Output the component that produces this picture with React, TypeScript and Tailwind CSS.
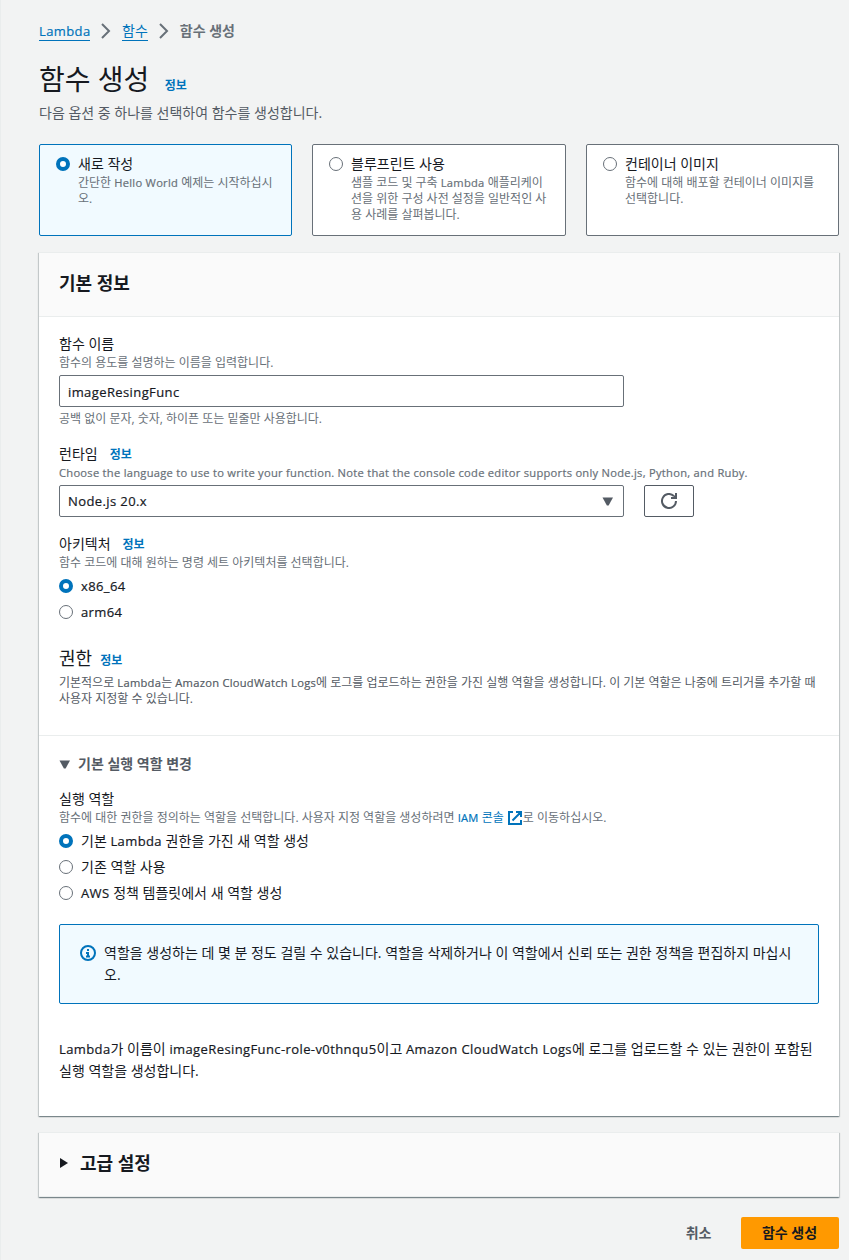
import React from "react";

function T({ children, small = false }: { children: string; small?: boolean }) {
  return (
    <>
      {children.split(/([A-Za-z][\x20-\x7e]*[A-Za-z0-9.])/).map((part, i) =>
        i % 2 === 1 ? (
          <span
            key={i}
            className={
              "text-[0.93em] font-medium [-webkit-text-stroke:0.2px_currentColor] " +
              (small ? "tracking-[0.0237em]" : "tracking-[0.03em]")
            }
          >
            {part}
          </span>
        ) : (
          part
        ),
      )}
    </>
  );
}

function Radio({ checked = false }: { checked?: boolean }) {
  return (
    <svg width="14" height="14" viewBox="0 0 14 14" className="block shrink-0">
      {checked ? (
        <circle cx="7" cy="7" r="5" fill="#fff" stroke="#0073bb" strokeWidth="4" />
      ) : (
        <circle cx="7" cy="7" r="6.5" fill="#fff" stroke="#687078" />
      )}
    </svg>
  );
}

function Chevron() {
  return (
    <svg width="10" height="16" viewBox="0 0 10 16" className="block shrink-0" fill="none">
      <path d="M1 1l7 7-7 7" stroke="#687078" strokeWidth="2" />
    </svg>
  );
}

function CaretDown() {
  return (
    <svg width="11" height="9" viewBox="0 0 11 9" className="block shrink-0">
      <path d="M.5.5h10.5l-4.4 8h-1.7z" fill="#545b64" />
    </svg>
  );
}

function Info({ className = "" }: { className?: string }) {
  return <a className={"text-xs leading-4 font-bold text-[#0073bb] " + className}>정보</a>;
}

function Tile({ title, lines, checked = false }: { title: string; lines: string[]; checked?: boolean }) {
  return (
    <div
      className={
        "flex h-[92px] rounded-[2px] border pl-4 pt-2 " +
        (checked ? "border-[#0073bb] bg-[#f1faff]" : "border-[#687078] bg-white")
      }
    >
      <div className="pt-1">
        <Radio checked={checked} />
      </div>
      <div className="ml-2">
        <div className="h-[22px] text-sm leading-[22px] text-[#16191f]">{title}</div>
        {lines.map((line) => (
          <div key={line} className="h-4 text-xs leading-4 text-[#687078]"><T small>{line}</T></div>
        ))}
      </div>
    </div>
  );
}

function Option({ label, checked = false }: { label: string; checked?: boolean }) {
  return (
    <div className="flex h-[22px] items-center gap-2">
      <Radio checked={checked} />
      <span className="text-sm leading-[22px]"><T>{label}</T></span>
    </div>
  );
}

function Label({ text, info = false }: { text: string; info?: boolean }) {
  return (
    <div className="flex h-[22px] items-baseline text-sm leading-[22px]">
      <span>{text}</span>
      {info && <Info className="ml-3" />}
    </div>
  );
}

function Hint({ children }: { children: React.ReactNode }) {
  return <div className="h-4 text-xs leading-4 text-[#687078]">{children}</div>;
}

const panel =
  "border-t border-[#eaeded] shadow-[0_1px_1px_0_rgba(0,28,36,0.3),1px_1px_1px_0_rgba(0,28,36,0.15),-1px_1px_1px_0_rgba(0,28,36,0.15)]";

export default function App() {
  return (
    <div className="h-[1260px] w-[849px] overflow-hidden whitespace-nowrap border-l border-[#eaeded] bg-[#f2f3f3] pl-[38px] pr-[10px] font-['Open_Sans','Noto_Sans_CJK_KR',sans-serif] text-[#16191f]">
      <nav className="flex h-[62px] items-center text-sm leading-[18px] text-[#0073bb]">
        <a className="w-[51px] border-b border-[#0073bb]"><T>Lambda</T></a>
        <span className="ml-[11px]"><Chevron /></span>
        <a className="ml-[11px] border-b border-[#0073bb]">함수</a>
        <span className="ml-[11px]"><Chevron /></span>
        <span className="ml-[11px] font-bold text-[#687078]">함수 생성</span>
      </nav>

      <div className="-mt-px flex h-[41px] items-baseline leading-9">
        <h1 className="text-[28px] leading-9">함수 생성</h1>
        <Info className="ml-[15.5px]" />
      </div>
      <p className="h-[42px] text-sm leading-[22px] text-[#545b64]">다음 옵션 중 하나를 선택하여 함수를 생성합니다.</p>

      <div className="grid grid-cols-[253px_254px_253px] gap-5">
        <Tile checked title="새로 작성" lines={["간단한 Hello World 예제는 시작하십시", "오."]} />
        <Tile
          title="블루프린트 사용"
          lines={["샘플 코드 및 구축 Lambda 애플리케이", "션을 위한 구성 사전 설정을 일반적인 사", "용 사례를 살펴봅니다."]}
        />
        <Tile title="컨테이너 이미지" lines={["함수에 대해 배포할 컨테이너 이미지를", "선택합니다."]} />
      </div>

      <section className={"mt-4 h-[864px] bg-white " + panel}>
        <header className="flex h-16 items-center border-b border-[#eaeded] bg-[#fafafa] px-5 pb-1">
          <h2 className="text-lg leading-[22px] font-bold">기본 정보</h2>
        </header>

        <div className="h-[418px] px-5 pt-4">
          <Label text="함수 이름" />
          <Hint>함수의 용도를 설명하는 이름을 입력합니다.</Hint>
          <div className="mt-1 flex h-8 w-[565px] items-center rounded-[2px] border border-[#687078] px-2 pt-0.5 text-sm">
            <span><T>imageResingFunc</T></span>
          </div>
          <div className="mt-1"><Hint>공백 없이 문자, 숫자, 하이픈 또는 밑줄만 사용합니다.</Hint></div>

          <div className="mt-4">
            <Label text="런타임" info />
            <Hint><T small>Choose the language to use to write your function. Note that the console code editor supports only Node.js, Python, and Ruby.</T></Hint>
          </div>
          <div className="mt-1 flex gap-5">
            <div className="flex h-8 w-[565px] items-center justify-between rounded-[2px] border border-[#687078] pl-2 pr-[10px] text-sm">
              <span><T>Node.js 20.x</T></span>
              <CaretDown />
            </div>
            <button className="flex h-8 w-[50px] items-center justify-center rounded-[2px] border border-[#545b64] bg-white">
              <svg width="16" height="16" viewBox="0 0 16 16" fill="none" stroke="#545b64" strokeWidth="2">
                <path d="M15 8a7 7 0 1 1-2.2-5.1" />
                <path d="M10 5h5V0" />
                <path d="M11 5l4-4v4z" fill="#545b64" stroke="none" />
              </svg>
            </button>
          </div>

          <div className="mt-4">
            <Label text="아키텍처" info />
            <Hint>함수 코드에 대해 원하는 명령 세트 아키텍처를 선택합니다.</Hint>
          </div>
          <div className="mt-1 flex flex-col gap-1">
            <Option checked label="x86_64" />
            <Option label="arm64" />
          </div>

          <div className="mt-6 flex h-7 items-baseline">
            <h3 className="text-lg leading-[22px]">권한</h3>
            <Info className="ml-2" />
          </div>
          <div className="text-xs leading-4 text-[#545b64]">
            <div className="h-4"><T small>기본적으로 Lambda는 Amazon CloudWatch Logs에 로그를 업로드하는 권한을 가진 실행 역할을 생성합니다. 이 기본 역할은 나중에 트리거를 추가할 때</T></div>
            <div className="h-4">사용자 지정할 수 있습니다.</div>
          </div>
        </div>

        <div className="border-t border-[#eaeded] px-5 pt-[17px]">
          <div className="flex h-[22px] items-center text-sm font-bold text-[#545b64]">
            <CaretDown />
            <span className="ml-2">기본 실행 역할 변경</span>
          </div>
          <div className="mt-[13px]">
            <Label text="실행 역할" />
            <Hint>
              <span className="flex">
                <span>함수에 대한 권한을 정의하는 역할을 선택합니다. 사용자 지정 역할을 생성하려면&nbsp;</span>
                <a className="text-[#0073bb]"><T small>IAM 콘솔</T></a>
                <svg width="16" height="16" viewBox="0 0 16 16" fill="none" stroke="#0073bb" strokeWidth="2" className="ml-[3px] block">
                  <path d="M6 2H2v12h12v-4M9 2h5v5M14 2L5.5 10.5" />
                  <path d="M10 2h4v4z" fill="#0073bb" stroke="none" />
                </svg>
                <span>로 이동하십시오.</span>
              </span>
            </Hint>
          </div>
          <div className="mt-1 flex flex-col gap-1">
            <Option checked label="기본 Lambda 권한을 가진 새 역할 생성" />
            <Option label="기존 역할 사용" />
            <Option label="AWS 정책 템플릿에서 새 역할 생성" />
          </div>

          <div className="mt-5 flex h-20 rounded-[2px] border border-[#0073bb] bg-[#f1faff] pl-5 pt-[17px]">
            <svg width="16" height="16" viewBox="0 0 16 16" fill="none" stroke="#0073bb" strokeWidth="2" className="mt-[3px] shrink-0">
              <circle cx="8" cy="8" r="7" />
              <path d="M8 11V8H6M6 11.5h4M7 5h2" />
            </svg>
            <p className="ml-2 text-sm leading-[22px]">
              역할을 생성하는 데 몇 분 정도 걸릴 수 있습니다. 역할을 삭제하거나 이 역할에서 신뢰 또는 권한 정책을 편집하지 마십시
              <br />
              오.
            </p>
          </div>

          <p className="mt-[34px] text-sm leading-[22px]">
            <T>Lambda가 이름이 imageResingFunc-role-v0thnqu5이고 Amazon CloudWatch Logs에 로그를 업로드할 수 있는 권한이 포함된</T>
            <br />
            실행 역할을 생성합니다.
          </p>
        </div>
      </section>

      <section className={"mt-4 flex h-[65px] items-center border-b bg-[#fafafa] px-5 pb-[3px] " + panel}>
        <svg width="9" height="10" viewBox="0 0 9 10"><path d="M1 0l8 5-8 5z" fill="#16191f" /></svg>
        <h2 className="ml-3 text-lg leading-[22px] font-bold">고급 설정</h2>
      </section>

      <div className="mt-5 flex items-center justify-end text-sm font-bold">
        <button className="mr-[29.5px] text-[#545b64]">취소</button>
        <button className="h-8 w-[98px] rounded-[2px] bg-[#ff9900] pr-px">함수 생성</button>
      </div>
    </div>
  );
}
